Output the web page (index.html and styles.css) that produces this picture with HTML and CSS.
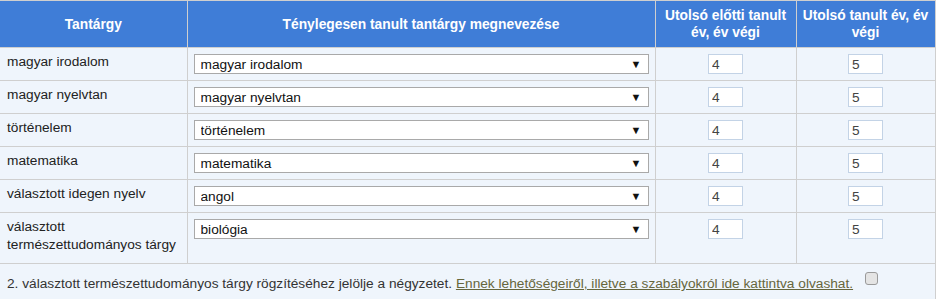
FILE: index.html
```html
<!DOCTYPE html>
<html>
  <head>
    <meta charset="utf-8">
    <title>Tantárgyak</title>
    <link rel="stylesheet" href="styles.css">
  </head>
  <body>
    <table class="grades">
      <colgroup>
        <col class="c-subject">
        <col class="c-name">
        <col class="c-prev">
        <col class="c-last">
      </colgroup>
      <thead>
        <tr>
          <th>Tantárgy</th>
          <th>Ténylegesen tanult tantárgy megnevezése</th>
          <th>Utolsó előtti tanult év, év végi</th>
          <th>Utolsó tanult év, év végi</th>
        </tr>
      </thead>
      <tbody>
        <tr>
          <td>magyar irodalom</td>
          <td class="sel"><span class="pick"><select><option>magyar irodalom</option></select></span></td>
          <td class="num"><input type="text" value="4"></td>
          <td class="num"><input type="text" value="5"></td>
        </tr>
        <tr>
          <td>magyar nyelvtan</td>
          <td class="sel"><span class="pick"><select><option>magyar nyelvtan</option></select></span></td>
          <td class="num"><input type="text" value="4"></td>
          <td class="num"><input type="text" value="5"></td>
        </tr>
        <tr>
          <td>történelem</td>
          <td class="sel"><span class="pick"><select><option>történelem</option></select></span></td>
          <td class="num"><input type="text" value="4"></td>
          <td class="num"><input type="text" value="5"></td>
        </tr>
        <tr>
          <td>matematika</td>
          <td class="sel"><span class="pick"><select><option>matematika</option></select></span></td>
          <td class="num"><input type="text" value="4"></td>
          <td class="num"><input type="text" value="5"></td>
        </tr>
        <tr>
          <td>választott idegen nyelv</td>
          <td class="sel"><span class="pick"><select><option>angol</option></select></span></td>
          <td class="num"><input type="text" value="4"></td>
          <td class="num"><input type="text" value="5"></td>
        </tr>
        <tr>
          <td>választott<br>természettudományos tárgy</td>
          <td class="sel"><span class="pick"><select><option>biológia</option></select></span></td>
          <td class="num"><input type="text" value="4"></td>
          <td class="num"><input type="text" value="5"></td>
        </tr>
        <tr>
          <td class="note" colspan="4">2. választott természettudományos tárgy rögzítéséhez jelölje a négyzetet. <a href="#">Ennek lehetőségeiről, illetve a szabályokról ide kattintva olvashat.</a> <input type="checkbox" class="tick"></td>
        </tr>
      </tbody>
    </table>
  </body>
</html>
```

FILE: styles.css
```css
body{margin:0;background:#fff;font-family:Arial,"Liberation Sans",sans-serif;font-size:13.7px;color:#222}
.grades{border-collapse:collapse;table-layout:fixed;width:935px}
.c-subject{width:187px}
.c-name{width:468px}
.c-prev{width:141px}
.c-last{width:139px}
.grades th,.grades td{border:1px solid #cfcfcf;border-left:none}
.grades th{background:#3f7dd7;color:#fff;font-size:13.8px;font-weight:bold;line-height:17px;padding:6px 4px 6px;vertical-align:middle;text-align:center}
.grades td{background:#eff5fc;line-height:18px;padding:5px 7px 9px;vertical-align:top}
.grades td.sel{padding:6px}
.grades td.num{padding:6px 4px;text-align:center}
.pick{display:block;position:relative}
.pick::after{content:"\25BC";position:absolute;right:7px;top:2px;font-size:11px;line-height:16px;color:#111;pointer-events:none}
.pick select{display:block;width:100%;height:20px;margin:0;padding:0 20px 0 6px;border:1px solid #a9a9a9;border-radius:0;background:#fff;font-family:Arial,"Liberation Sans",sans-serif;font-size:13.7px;color:#111;-webkit-appearance:none;appearance:none}
.num input{width:35px;height:20px;box-sizing:border-box;margin:0;padding:0 3px;border:1px solid #c3d3e6;background:#fff;font-family:Arial,"Liberation Sans",sans-serif;font-size:13.7px;color:#444}
.grades td.note{padding:8px 7px 7px;color:#333}
.note a{color:#66663c;text-decoration:underline}
.tick{-webkit-appearance:none;appearance:none;width:13px;height:13px;margin:0 0 0 8px;vertical-align:3px;border:1px solid #9a9a9a;border-radius:3px;background:#e4e4e4}
```
